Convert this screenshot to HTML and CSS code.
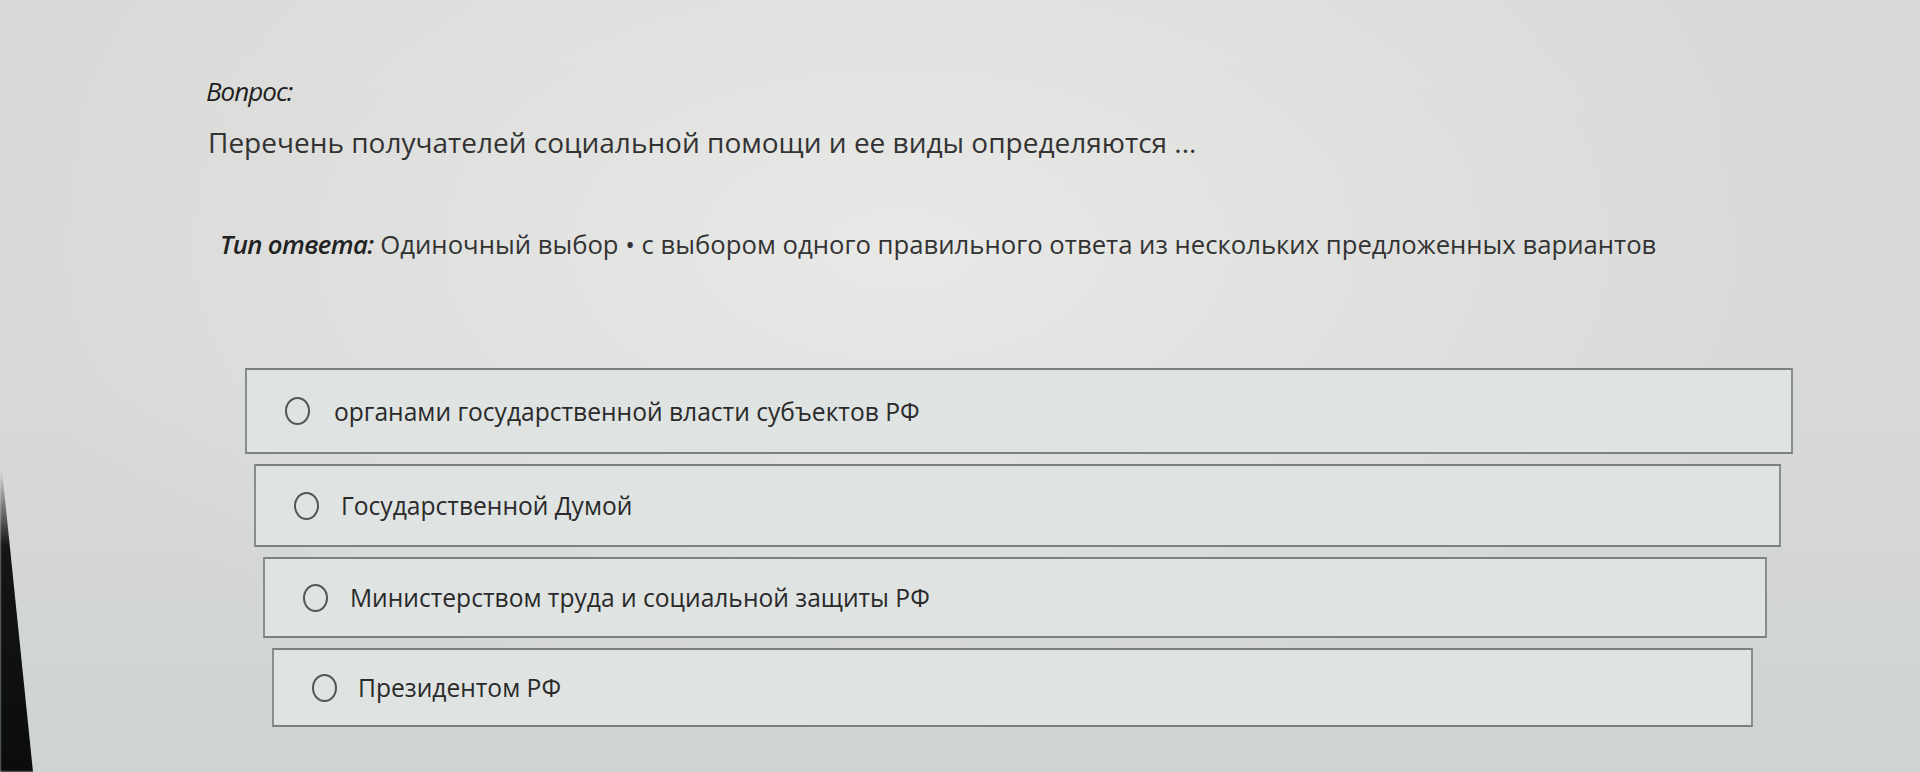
FILE: index.html
```html
<!DOCTYPE html>
<html lang="ru">
<head>
<meta charset="utf-8">
<title>Вопрос</title>
<link rel="stylesheet" href="styles.css">
</head>
<body>
<div class="bezel"></div>
<main class="page">
  <section class="question">
    <div class="label">Вопрос:</div>
    <p class="text">Перечень получателей социальной помощи и ее виды определяются ...</p>
  </section>
  <p class="type"><span class="type-label">Тип ответа:</span> Одиночный выбор • с выбором одного правильного ответа из нескольких предложенных вариантов</p>
  <ul class="options">
    <li class="option o1"><span class="radio"></span><span class="opt-text">органами государственной власти субъектов РФ</span></li>
    <li class="option o2"><span class="radio"></span><span class="opt-text">Государственной Думой</span></li>
    <li class="option o3"><span class="radio"></span><span class="opt-text">Министерством труда и социальной защиты РФ</span></li>
    <li class="option o4"><span class="radio"></span><span class="opt-text">Президентом РФ</span></li>
  </ul>
</main>
</body>
</html>
```
FILE: styles.css
```css
html, body {
  margin: 0;
  padding: 0;
  height: 100%;
}
body {
  width: 1920px;
  height: 772px;
  overflow: hidden;
  position: relative;
  font-family: "Open Sans", "Noto Sans", "Liberation Sans", sans-serif;
  color: #2b2b2b;
  background:
    radial-gradient(ellipse 1300px 700px at 900px 250px, rgba(234,235,233,0.9), rgba(234,235,233,0) 70%),
    linear-gradient(180deg, #dadad8 0%, #d8dad8 50%, #cfd3d1 100%);
}
.bezel {
  position: absolute;
  left: 0;
  top: 470px;
  width: 36px;
  height: 302px;
  background: linear-gradient(180deg, rgba(20,22,22,0) 0%, #141616 25%, #0b0d0d 100%);
  clip-path: polygon(0 0, 2px 0, 33px 100%, 0 100%);
  filter: blur(1px);
}
.page {
  padding: 74px 0 0 206px;
}
.question {
  display: flex;
  flex-direction: column;
}
.label {
  font-size: 26px;
  font-style: italic;
  font-weight: 500;
  letter-spacing: -1px;
  color: #1f1f1f;
  line-height: 34px;
}
.text {
  margin: 16px 0 0 2px;
  font-size: 28px;
  line-height: 36px;
  color: #333;
}
.type {
  margin: 68px 0 0 14px;
  font-size: 25.7px;
  line-height: 34px;
  color: #333;
}
.type-label {
  font-style: italic;
  font-weight: 600;
  letter-spacing: -0.6px;
  color: #222;
}
.options {
  list-style: none;
  margin: 106px 0 0 0;
  padding: 0;
  display: flex;
  flex-direction: column;
  gap: 10px;
}
.option {
  display: flex;
  align-items: center;
  gap: 24px;
  box-sizing: border-box;
  padding-left: 38px;
  background: #dfe3e2;
  border: 2px solid #7d8080;
  border-left-color: #8a8d8d;
  border-right-color: #8a8d8d;
}
.o1 { margin-left: 39px; width: 1548px; height: 86px; }
.o2 { margin-left: 48px; width: 1527px; height: 83px; }
.o3 { margin-left: 57px; width: 1504px; height: 81px; }
.o4 { margin-left: 66px; width: 1481px; height: 79px; }
.o2 .opt-text { margin-left: -2px; }
.o3 .opt-text { margin-left: -2px; }
.o4 .opt-text { margin-left: -3px; }
.radio {
  flex: none;
  width: 25px;
  height: 28px;
  border: 2px solid #555;
  border-radius: 50%;
  box-sizing: border-box;
}
.opt-text {
  font-size: 24.6px;
  color: #2a2a2a;
}
```
